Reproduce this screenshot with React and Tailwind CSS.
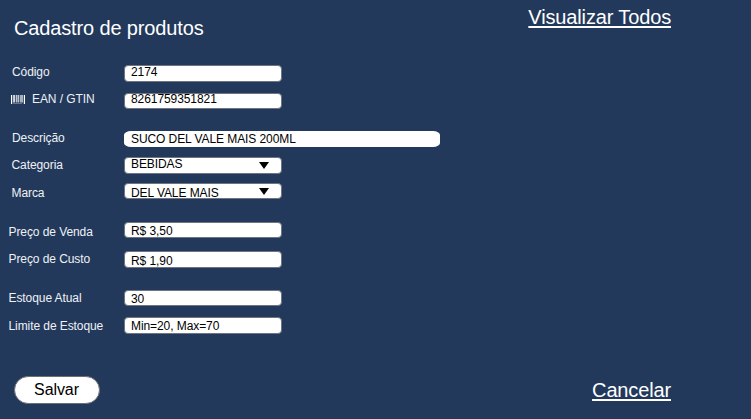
import React from "react";

function Barcode() {
  return (
    <svg className="mr-[7px] mt-1 h-[9px] w-[14px] shrink-0" viewBox="0 0 14 9" fill="#fff">
      <rect x="0" y="0" width="1.2" height="9" />
      <rect x="2.3" y="0" width="1.5" height="7.5" />
      <rect x="4.8" y="0" width="0.9" height="7.5" />
      <rect x="6.6" y="0" width="1.1" height="7.5" />
      <rect x="8.8" y="0" width="0.8" height="7.5" />
      <rect x="10.4" y="0" width="1.2" height="7.5" />
      <rect x="12.8" y="0" width="1.2" height="9" />
      <rect x="2" y="8" width="9" height="1" opacity="0.3" />
    </svg>
  );
}

function Arrow() {
  return (
    <svg className="ml-auto mr-3 mt-1 h-[7px] w-[10px] shrink-0" viewBox="0 0 10 7">
      <path d="M0 0H10L5 7Z" fill="#000" />
    </svg>
  );
}

const box = "flex w-[158px] shrink-0 items-start rounded-[4px] border border-[#6f7480] bg-white pl-1.5 text-black";

function Field({ label, value, row, labelClass, valueClass, boxClass = box, icon, select }) {
  return (
    <div className={`flex items-start ${row}`}>
      <div className={`flex w-[124px] shrink-0 items-start whitespace-nowrap text-[#eef1f6] ${labelClass}`}>
        {icon}
        <span>{label}</span>
      </div>
      <div className={`h-full ${boxClass}`}>
        <span className={`whitespace-nowrap ${valueClass}`}>{value}</span>
        {select && <Arrow />}
      </div>
    </div>
  );
}

export default function App() {
  return (
    <div className="flex h-[419px] w-[751px] flex-col overflow-hidden bg-[#23395b] font-['Liberation_Sans',Arial,sans-serif] text-[12px] leading-4 tracking-[-0.08px] text-white">
      <header className="flex h-[65px] shrink-0 items-start justify-between pl-3.5 pr-20 text-[20px] leading-6 tracking-[-0.14px]">
        <h1 className="mt-4">Cadastro de produtos</h1>
        <a className="mt-[5px] underline decoration-2 underline-offset-2">Visualizar Todos</a>
      </header>
      <main className="flex h-[311px] shrink-0 flex-col">
        <Field label="Código" value="2174" row="h-[17px]" labelClass="-mt-px pl-3" valueClass="-mt-0.5" />
        <Field label="EAN / GTIN" value="8261759351821" row="mt-[11px] h-4" labelClass="-mt-0.5 pl-[11px]" valueClass="-mt-[3px]" icon={<Barcode />} />
        <Field label="Descrição" value="SUCO DEL VALE MAIS 200ML" row="mt-[22px] h-4" labelClass="-mt-px pl-3" valueClass=""
          boxClass="flex w-[316px] shrink-0 items-start rounded-[7px/4px] bg-white pl-[7px] text-black" />
        <Field label="Categoria" value="BEBIDAS" row="mt-2.5 h-[17px]" labelClass="pl-[11.5px]" valueClass="-mt-0.5" select />
        <Field label="Marca" value="DEL VALE MAIS" row="mt-[9px] h-4" labelClass="mt-0.5 pl-[11.5px]" valueClass="mt-px" select />
        <Field label="Preço de Venda" value="R$ 3,50" row="mt-[23px] h-4" labelClass="mt-0.5 pl-[8.5px]" valueClass="" />
        <Field label="Preço de Custo" value="R$ 1,90" row="mt-[13px] h-[17px]" labelClass="pl-[8.5px]" valueClass="mt-px" />
        <Field label="Estoque Atual" value="30" row="mt-[22px] h-4" labelClass="pl-[8.5px]" valueClass="" />
        <Field label="Limite de Estoque" value="Min=20, Max=70" row="mt-[11px] h-[17px]" labelClass="mt-px pl-[8.5px]" valueClass="" />
      </main>
      <footer className="flex items-start justify-between pl-3.5 pr-20">
        <button className="h-7 w-[86px] rounded-full border border-[#6f6f70] bg-white pr-px text-[16px] leading-[26px] text-black">Salvar</button>
        <a className="mt-0.5 text-[20px] leading-6 tracking-[-0.14px] underline decoration-2 underline-offset-2">Cancelar</a>
      </footer>
    </div>
  );
}
